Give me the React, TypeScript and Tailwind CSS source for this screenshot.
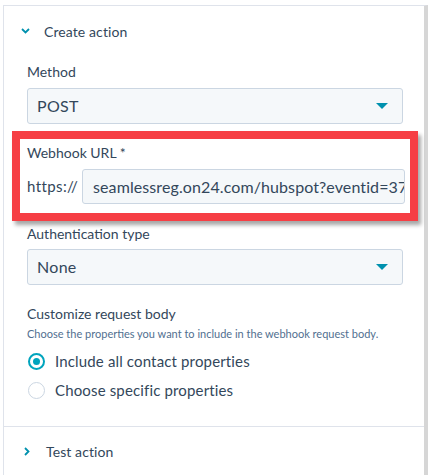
import React from 'react';

const font = { fontFamily: 'Lato, "Open Sans", sans-serif' };

function Caret() {
  return (
    <svg width="12" height="6" viewBox="0 0 12 6" className="shrink-0">
      <path d="M0 0 L12 0 L6 6 Z" fill="#0091ae" />
    </svg>
  );
}

function Select({ value }: { value: string }) {
  return (
    <div className="flex h-[36px] w-[376px] items-center justify-between rounded-[3px] border border-[#cbd6e2] bg-[#f5f8fa] pl-[9px] pr-[14px] text-[16px] tracking-[0.3px] text-[#33475b]">
      <span>{value}</span>
      <Caret />
    </div>
  );
}

function Radio({ checked, label }: { checked?: boolean; label: string }) {
  return (
    <label className="flex h-[24px] items-center gap-[10px]">
      <span
        className={
          checked
            ? 'flex h-[17px] w-[17px] items-center justify-center rounded-full border-2 border-[#00a4bd] bg-white'
            : 'h-[17px] w-[17px] rounded-full border border-[#cbd6e2] bg-white'
        }
      >
        {checked && <span className="h-[7px] w-[7px] rounded-full bg-[#00a4bd]" />}
      </span>
      <span className="text-[15px] tracking-[0.15px] text-[#33475b]">{label}</span>
    </label>
  );
}

export default function App() {
  return (
    <div className="h-[476px] w-[431px] overflow-hidden bg-white pl-[3px] pt-[5px]" style={font}>
      <div className="w-[425px] border-l border-t border-r-4 border-l-[#dfe3eb] border-t-[#dfe3eb] border-r-[#d6d6d6]">
        {/* Create action header */}
        <div className="flex h-[50px] items-center gap-[14px] pl-[17px] text-[14px] tracking-[0.1px] text-[#33475b]">
          <svg width="9" height="6" viewBox="0 0 9 6">
            <path d="M1 1 L4.5 4.5 L8 1" fill="none" stroke="#0091ae" strokeWidth="1.8" />
          </svg>
          <span>Create action</span>
        </div>

        <div className="pl-[23px] pr-[21px]">
          <div className="mt-[6px] text-[14px] leading-[20px] text-[#33475b]">Method</div>
          <div className="mt-[6px]">
            <Select value="POST" />
          </div>

          {/* Webhook URL, highlighted */}
          <div className="-mx-[15px] mt-[7px] border-8 border-[#f63e44] pb-[9px] pl-[7px] pr-[5px] pt-[4px] shadow-[3px_4px_4px_rgba(0,0,0,0.35)]">
            <div className="text-[14px] leading-[20px] text-[#33475b]">Webhook URL *</div>
            <div className="mt-[6px] flex items-center gap-[7px]">
              <span className="w-[48px] text-[15px] tracking-[0.4px] text-[#33475b]">https://</span>
              <div className="flex h-[35px] flex-1 items-center overflow-hidden whitespace-nowrap rounded-[3px] border border-[#cbd6e2] bg-[#f5f8fa] pl-[10px] text-[16px] tracking-[0.1px] text-[#33475b]">
                seamlessreg.on24.com/hubspot?eventid=3727
              </div>
            </div>
          </div>

          <div className="mt-[3px] text-[14px] leading-[20px] text-[#33475b]">Authentication type</div>
          <div className="mt-[5px]">
            <Select value="None" />
          </div>

          <div className="mt-[19px] text-[14px] leading-[20px] text-[#33475b]">Customize request body</div>
          <div className="mt-[2px] text-[11px] leading-[16px] text-[#516f90]">
            Choose the properties you want to include in the webhook request body.
          </div>
          <div className="ml-[1px] mt-[7px] flex flex-col gap-[5px]">
            <Radio checked label="Include all contact properties" />
            <Radio label="Choose specific properties" />
          </div>
        </div>

        <div className="mt-[24px] border-t border-[#dfe3eb]" />

        {/* Test action header */}
        <div className="flex h-[48px] items-center gap-[16px] pl-[20px] text-[14px] tracking-[0.1px] text-[#33475b]">
          <svg width="6" height="9" viewBox="0 0 6 9">
            <path d="M1 1 L4.5 4.5 L1 8" fill="none" stroke="#0091ae" strokeWidth="1.8" />
          </svg>
          <span>Test action</span>
        </div>
      </div>
    </div>
  );
}
